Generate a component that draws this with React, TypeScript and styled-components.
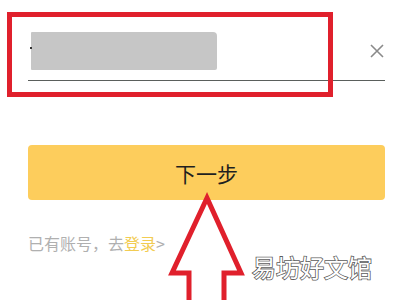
import React, { FC } from 'react';
import styled, { createGlobalStyle } from 'styled-components';

const GlobalStyle = createGlobalStyle`
  html, body {
    margin: 0;
    padding: 0;
    background: #fff;
  }
  body {
    font-family: "Noto Sans CJK SC", "Noto Sans", sans-serif;
    overflow: hidden;
  }
`;

const Page = styled.div`
  position: relative;
  width: 400px;
  height: 300px;
  padding: 0 15px 0 28px;
  box-sizing: border-box;
  overflow: hidden;
`;

const InputRow = styled.div`
  display: flex;
  align-items: center;
  justify-content: space-between;
  height: 81px;
  border-bottom: 1px solid #5a5f5c;
  padding-top: 22px;
  box-sizing: border-box;
`;

const Masked = styled.div`
  position: relative;
  width: 186px;
  height: 38px;
  margin-left: 3px;
  background: #c6c6c6;
  border-radius: 1px 4px 2px 1px;

  &::before {
    content: '';
    position: absolute;
    left: -1px;
    top: 15px;
    width: 2px;
    height: 2px;
    background: #333;
  }
`;

const ClearIcon = styled.svg`
  width: 16px;
  height: 16px;
`;

const NextButton = styled.button`
  display: flex;
  align-items: center;
  justify-content: center;
  width: 100%;
  height: 55px;
  margin-top: 64px;
  border: none;
  border-radius: 4px;
  background: #fdcd5c;
  color: #1f1f1f;
  font-family: inherit;
  font-size: 21px;
`;

const LoginHint = styled.div`
  margin-top: 33px;
  font-size: 16px;
  line-height: 20px;
  color: #b0b0b0;

  b {
    font-weight: normal;
    color: #f2cc52;
  }
`;

const Highlight = styled.div`
  position: absolute;
  left: 7px;
  top: 12px;
  width: 326px;
  height: 85px;
  border: 5px solid #e0202c;
  box-sizing: border-box;
`;

const Arrow = styled.svg`
  position: absolute;
  left: 0;
  top: 0;
`;

const Watermark = styled.div`
  position: absolute;
  left: 252px;
  top: 251px;
  font-size: 24px;
  line-height: 32px;
  color: #fff;
  -webkit-text-stroke: 1.6px #5c5c5c;
  paint-order: stroke fill;
`;

const App: FC = () => (
  <>
    <GlobalStyle />
    <Page>
      <InputRow>
        <Masked />
        <ClearIcon viewBox="0 0 16 16">
          <path
            d="M2 2 L14 14 M14 2 L2 14"
            stroke="#8a8a8a"
            strokeWidth="1.6"
            fill="none"
          />
        </ClearIcon>
      </InputRow>
      <NextButton>下一步</NextButton>
      <LoginHint>
        已有账号，去<b>登录</b>&gt;
      </LoginHint>
      <Highlight />
      <Arrow width="400" height="300" viewBox="0 0 400 300">
        <polygon
          points="207,198 172,273 189,273 189,310 224,310 224,273 241,273"
          fill="#fff"
          stroke="#e0202c"
          strokeWidth="5"
        />
      </Arrow>
      <Watermark>易坊好文馆</Watermark>
    </Page>
  </>
);

export default App;
